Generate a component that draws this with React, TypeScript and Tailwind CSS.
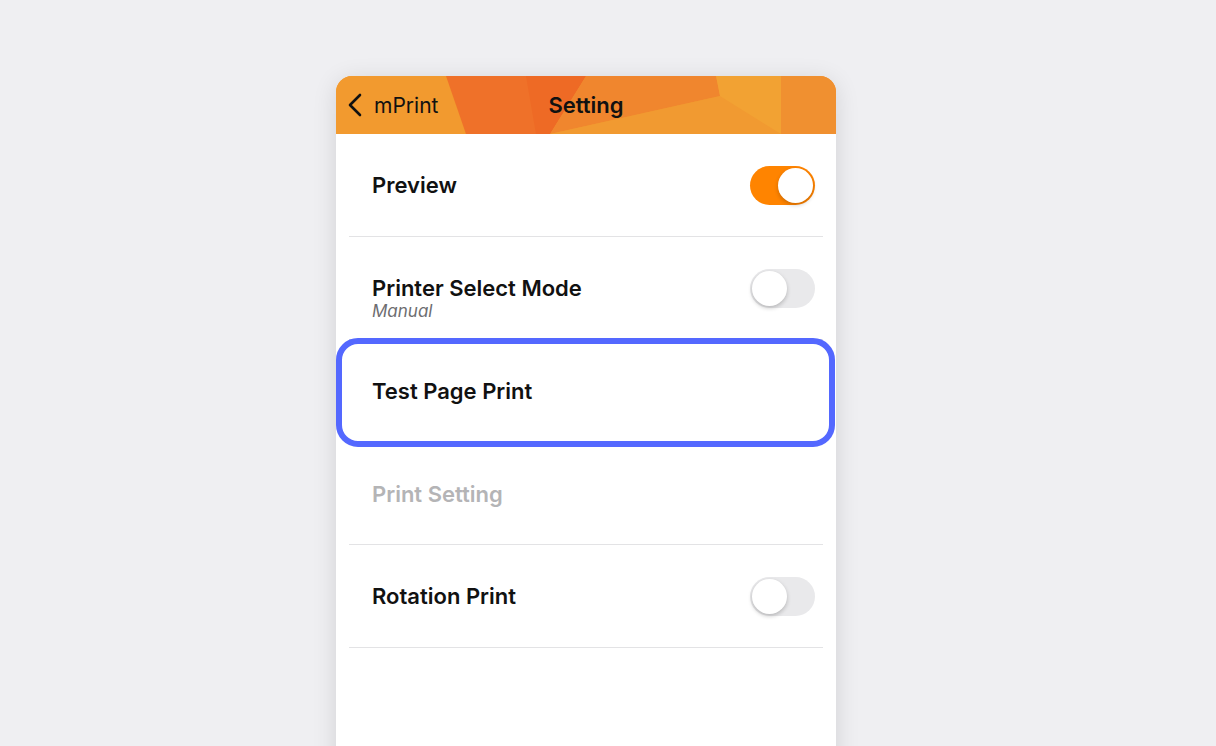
import React from "react";

const font = { fontFamily: "Inter, 'Noto Sans', sans-serif" };

function Toggle({ on }: { on: boolean }) {
  return (
    <div
      className={
        on
          ? "relative w-[65px] h-[39px] rounded-full bg-[#ff8400] shrink-0"
          : "relative w-[65px] h-[39px] rounded-full bg-[#e9e9eb] shrink-0"
      }
    >
      <div
        className={
          on
            ? "absolute top-[2px] right-[2px] w-[35px] h-[35px] rounded-full bg-white shadow-[0_2px_4px_rgba(0,0,0,0.2)]"
            : "absolute top-[2px] left-[2px] w-[35px] h-[35px] rounded-full bg-white shadow-[0_2px_4px_rgba(0,0,0,0.22)]"
        }
      />
    </div>
  );
}

function Divider() {
  return <div className="mx-[13px] h-px bg-[#e3e3e5]" />;
}

function Row({
  title,
  toggle,
  muted,
  h = "h-[102px]",
}: {
  title: string;
  toggle?: boolean;
  muted?: boolean;
  h?: string;
}) {
  return (
    <div className={h + " flex items-center justify-between pl-[36px] pr-[21px]"}>
      <span
        className={
          muted
            ? "text-[22px] font-semibold text-[#b4b4b6] leading-[26px]"
            : "text-[22px] font-semibold text-[#111] leading-[26px]"
        }
      >
        {title}
      </span>
      {toggle !== undefined && <Toggle on={toggle} />}
    </div>
  );
}

function SubRow({ title, sub, toggle }: { title: string; sub: string; toggle: boolean }) {
  return (
    <div className="h-[102px] flex items-start justify-between pl-[36px] pr-[21px]">
      <div className="flex flex-col pt-[38px]">
        <span className="text-[22px] font-semibold text-[#111] leading-[26px]">{title}</span>
        <span className="text-[17px] italic text-[#6d6d70] leading-[20px]">{sub}</span>
      </div>
      <div className="pt-[32px]">
        <Toggle on={toggle} />
      </div>
    </div>
  );
}

function HeaderBg() {
  return (
    <svg
      className="absolute inset-0 w-full h-full"
      viewBox="0 0 500 58"
      preserveAspectRatio="none"
    >
      <defs>
        <linearGradient id="g1" x1="0" y1="0" x2="1" y2="0">
          <stop offset="0" stopColor="#f39b2e" />
          <stop offset="1" stopColor="#f0922e" />
        </linearGradient>
      </defs>
      <rect x="0" y="0" width="500" height="58" fill="url(#g1)" />
      <polygon points="0,0 110,0 130,58 0,58" fill="#f29a2f" />
      <polygon points="110,0 250,0 214,58 130,58" fill="#ef7129" />
      <polygon points="190,0 250,0 214,58 200,58" fill="#ee6a25" />
      <polygon points="250,0 380,0 384,20 214,58" fill="#f0862e" />
      <polygon points="214,58 384,20 445,0 445,58" fill="#f19a31" />
      <polygon points="380,0 445,0 445,58 384,20" fill="#f2a233" />
      <polygon points="445,0 500,0 500,58 445,58" fill="#f09030" />
    </svg>
  );
}

export default function App() {
  return (
    <div
      className="w-[1216px] h-[746px] overflow-hidden bg-[#efeff2] flex justify-start pl-[336px] pt-[76px]"
      style={font}
    >
      <div className="w-[500px] h-[720px] bg-white rounded-t-[16px] overflow-hidden shadow-[0_4px_24px_rgba(0,0,0,0.12)] flex flex-col">
        <div className="relative h-[58px] shrink-0">
          <HeaderBg />
          <div className="relative h-full flex items-center">
            <div className="flex items-center pl-[11px] w-[160px]">
              <svg width="16" height="24" viewBox="0 0 16 24" className="mr-[11px]">
                <path
                  d="M13 2 L3 12 L13 22"
                  fill="none"
                  stroke="#111"
                  strokeWidth="2.6"
                  strokeLinecap="round"
                  strokeLinejoin="round"
                />
              </svg>
              <span className="text-[21px] text-[#111] leading-none">mPrint</span>
            </div>
            <div className="absolute inset-0 flex items-center justify-center pointer-events-none">
              <span className="text-[22px] font-semibold text-[#111] leading-none">Setting</span>
            </div>
          </div>
        </div>

        <Row title="Preview" toggle={true} />
        <Divider />
        <SubRow title="Printer Select Mode" sub="Manual" toggle={false} />
        <Divider />
        <div className="relative">
          <Row title="Test Page Print" />
          <div className="absolute left-0 right-[1px] top-[-2px] bottom-[-5px] border-[6px] border-[#5468ff] rounded-[22px] pointer-events-none" />
        </div>
        <Divider />
        <Row title="Print Setting" muted h="h-[101px]" />
        <Divider />
        <Row title="Rotation Print" toggle={false} />
        <Divider />
      </div>
    </div>
  );
}
